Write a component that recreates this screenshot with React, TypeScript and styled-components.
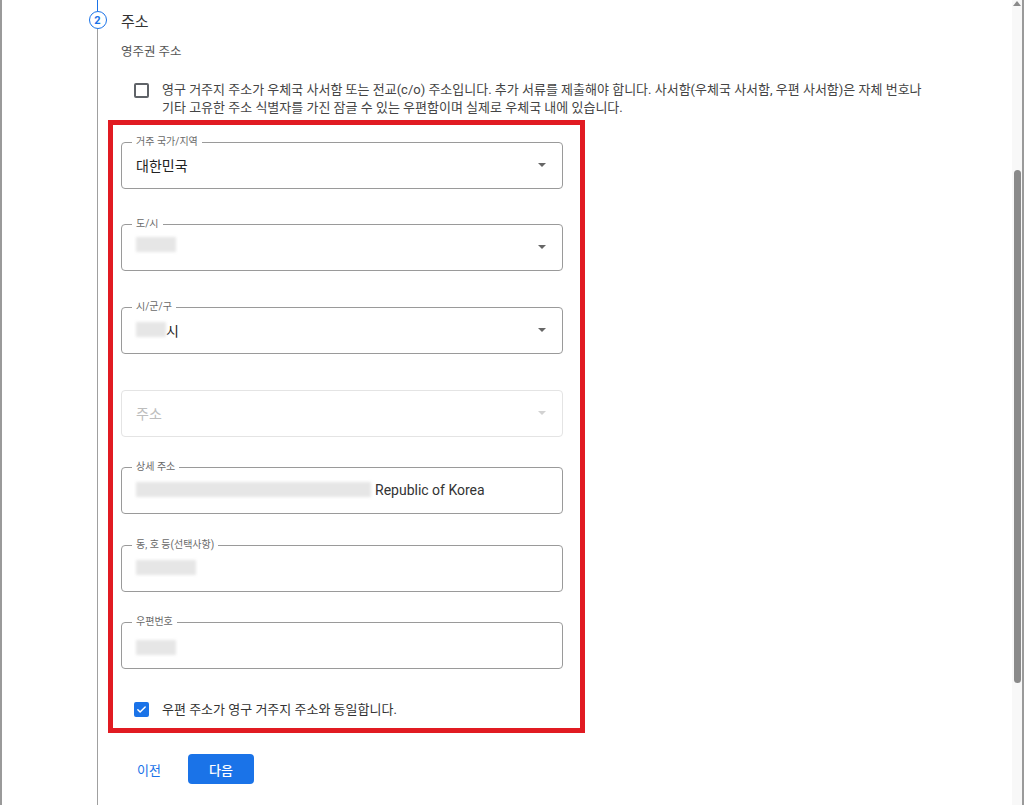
import styled, { createGlobalStyle } from 'styled-components';

const GlobalStyle = createGlobalStyle`
  html, body {
    margin: 0;
    padding: 0;
    background: #fff;
  }
  body {
    font-family: Roboto, "Noto Sans CJK KR", sans-serif;
  }
  * {
    box-sizing: border-box;
  }
`;

const Frame = styled.div`
  display: flex;
  width: 1024px;
  height: 805px;
  border-left: 2px solid #9a9a9a;
  border-right: 2px solid #9a9a9a;
  overflow: hidden;
`;

const Main = styled.div`
  flex: 1;
  display: flex;
  padding-left: 85px;
`;

const Rail = styled.div`
  width: 21px;
  display: flex;
  flex-direction: column;
  align-items: center;
`;

const RailLine = styled.div<{ $active?: boolean; $grow?: boolean }>`
  width: 1px;
  background: ${(p) => (p.$active ? '#1a73e8' : '#a0a0a0')};
  height: ${(p) => (p.$grow ? 'auto' : '11px')};
  flex: ${(p) => (p.$grow ? 1 : 'none')};
`;

const StepCircle = styled.div`
  width: 18px;
  height: 18px;
  border: 1.5px solid #1a73e8;
  border-radius: 50%;
  color: #1a73e8;
  font-size: 11px;
  font-weight: 700;
  display: flex;
  align-items: center;
  justify-content: center;
`;

const Content = styled.div`
  margin-left: 13px;
  display: flex;
  flex-direction: column;
`;

const Title = styled.div`
  height: 40px;
  display: flex;
  align-items: center;
  font-size: 15px;
  color: #333;
`;

const Subtitle = styled.div`
  margin-top: 2px;
  font-size: 12.5px;
  line-height: 20px;
  color: #555;
`;

const NoticeRow = styled.div`
  margin-top: 19px;
  padding-left: 13px;
  display: flex;
  gap: 13px;
`;

const NoticeText = styled.div`
  font-size: 13px;
  line-height: 18px;
  color: #444;

  span {
    display: block;
    white-space: nowrap;
  }
`;

const Checkbox = styled.div<{ $checked?: boolean }>`
  flex: none;
  width: 15px;
  height: 15px;
  margin-top: 2px;
  border: 2px solid ${(p) => (p.$checked ? '#1a73e8' : '#5f6368')};
  background: ${(p) => (p.$checked ? '#1a73e8' : '#fff')};
  border-radius: 2px;
  display: flex;
  align-items: center;
  justify-content: center;
`;

const Highlight = styled.div`
  margin-top: 3px;
  margin-left: -13px;
  width: 477px;
  border: 5px solid #e11b22;
  padding: 17px 17px 10px 8px;
  display: flex;
  flex-direction: column;
`;

const Field = styled.div<{ $gap?: number; $disabled?: boolean }>`
  position: relative;
  height: 47px;
  margin-top: ${(p) => p.$gap ?? 0}px;
  border: 1px solid ${(p) => (p.$disabled ? '#e4e4e4' : '#9a9a9a')};
  border-radius: 4px;
  display: flex;
  align-items: center;
  padding: 0 16px 2px 14px;
`;

const Legend = styled.span`
  position: absolute;
  top: -7px;
  left: 10px;
  padding: 0 4px;
  background: #fff;
  font-size: 10px;
  line-height: 12px;
  color: #6a6a6a;
`;

const Value = styled.span<{ $muted?: boolean }>`
  font-size: 14px;
  color: ${(p) => (p.$muted ? '#bdbdbd' : '#222')};
  display: flex;
  align-items: center;
`;

const Blur = styled.span<{ $w: number; $dy?: number }>`
  display: inline-block;
  width: ${(p) => p.$w}px;
  height: 15px;
  margin-top: ${(p) => p.$dy ?? 0}px;
  background: #e6e6e6;
  filter: blur(1.5px);
`;

const Arrow = styled.span<{ $muted?: boolean }>`
  margin-left: auto;
  width: 0;
  height: 0;
  border-left: 4.5px solid transparent;
  border-right: 4.5px solid transparent;
  border-top: 4.5px solid ${(p) => (p.$muted ? '#d2d2d2' : '#666')};
`;

const SameRow = styled.div`
  margin-top: 30px;
  padding-left: 13px;
  display: flex;
  align-items: center;
  gap: 13px;
  font-size: 13px;
  color: #333;
`;

const Actions = styled.div`
  margin-top: 21px;
  display: flex;
  align-items: center;
  gap: 11px;
`;

const TextButton = styled.button`
  height: 30px;
  padding: 0 16px;
  border: none;
  background: none;
  color: #1a73e8;
  font-family: inherit;
  font-size: 13px;
`;

const PrimaryButton = styled.button`
  width: 66px;
  height: 30px;
  border: none;
  border-radius: 4px;
  background: #1a73e8;
  color: #fff;
  font-family: inherit;
  font-size: 13px;
  font-weight: 500;
`;

const ScrollTrack = styled.div`
  width: 10px;
  background: #f8f8f8;
  display: flex;
  flex-direction: column;
  align-items: center;
`;

const ScrollArrow = styled.div`
  margin-top: 1px;
  width: 0;
  height: 0;
  border-left: 4px solid transparent;
  border-right: 4px solid transparent;
  border-bottom: 5px solid #8a8a8a;
`;

const ScrollThumb = styled.div`
  margin-top: 164px;
  width: 7px;
  height: 513px;
  border-radius: 4px;
  background: #8a8a8a;
`;

const Suffix = styled.span`
  margin-left: 4px;
  color: #333;
`;

function Check() {
  return (
    <svg width="11" height="11" viewBox="0 0 24 24" fill="none">
      <path d="M4 12.5l5 5L20 6.5" stroke="#fff" strokeWidth="3.2" strokeLinecap="round" strokeLinejoin="round" />
    </svg>
  );
}

export default function App() {
  return (
    <>
      <GlobalStyle />
      <Frame>
        <Main>
          <Rail>
            <RailLine $active />
            <StepCircle>2</StepCircle>
            <RailLine $grow />
          </Rail>
          <Content>
            <Title>주소</Title>
            <Subtitle>영주권 주소</Subtitle>
            <NoticeRow>
              <Checkbox />
              <NoticeText>
                <span>
                  영구 거주지 주소가 우체국 사서함 또는 전교(c/o) 주소입니다. 추가 서류를 제출해야 합니다. 사서함(우체국 사서함, 우편 사서함)은 자체 번호나
                </span>
                <span>기타 고유한 주소 식별자를 가진 잠글 수 있는 우편함이며 실제로 우체국 내에 있습니다.</span>
              </NoticeText>
            </NoticeRow>
            <Highlight>
              <Field>
                <Legend>거주 국가/지역</Legend>
                <Value>대한민국</Value>
                <Arrow />
              </Field>
              <Field $gap={35}>
                <Legend>도/시</Legend>
                <Value>
                  <Blur $w={40} $dy={-4} />
                </Value>
                <Arrow />
              </Field>
              <Field $gap={36}>
                <Legend>시/군/구</Legend>
                <Value>
                  <Blur $w={30} />
                  시
                </Value>
                <Arrow />
              </Field>
              <Field $gap={36} $disabled>
                <Value $muted>주소</Value>
                <Arrow $muted />
              </Field>
              <Field $gap={30}>
                <Legend>상세 주소</Legend>
                <Value>
                  <Blur $w={235} />
                  <Suffix>Republic of Korea</Suffix>
                </Value>
              </Field>
              <Field $gap={31}>
                <Legend>동, 호 등(선택사항)</Legend>
                <Value>
                  <Blur $w={60} />
                </Value>
              </Field>
              <Field $gap={30}>
                <Legend>우편번호</Legend>
                <Value>
                  <Blur $w={40} $dy={6} />
                </Value>
              </Field>
              <SameRow>
                <Checkbox $checked>
                  <Check />
                </Checkbox>
                우편 주소가 영구 거주지 주소와 동일합니다.
              </SameRow>
            </Highlight>
            <Actions>
              <TextButton>이전</TextButton>
              <PrimaryButton>다음</PrimaryButton>
            </Actions>
          </Content>
        </Main>
        <ScrollTrack>
          <ScrollArrow />
          <ScrollThumb />
        </ScrollTrack>
      </Frame>
    </>
  );
}
